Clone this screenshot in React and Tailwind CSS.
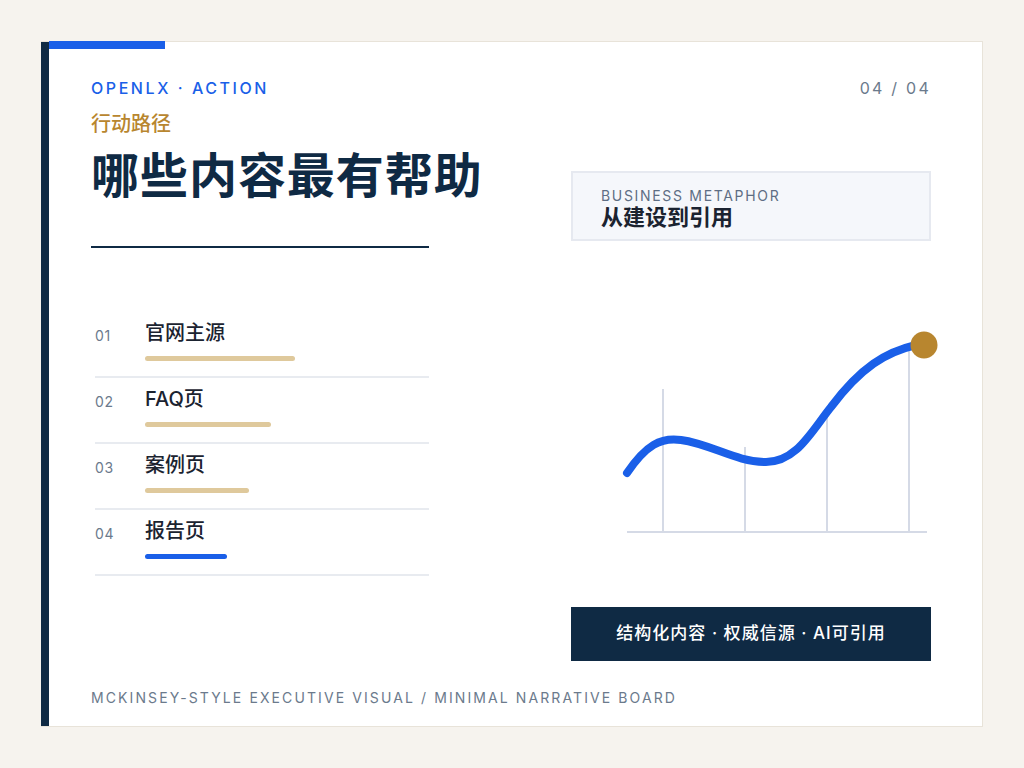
import React from 'react';

const items = [
  { no: '01', title: '官网主源', w: 'w-[150px]', color: 'bg-[#dfc99c]' },
  { no: '02', title: 'FAQ页', w: 'w-[126px]', color: 'bg-[#dfc99c]' },
  { no: '03', title: '案例页', w: 'w-[104px]', color: 'bg-[#dfc99c]' },
  { no: '04', title: '报告页', w: 'w-[82px]', color: 'bg-[#1a5fe8]' }
];

const font = { fontFamily: 'Inter, "Noto Sans CJK SC", sans-serif' };

const App = () => {
  return (
    <div className="w-[1024px] h-[768px] bg-[#f6f3ee] pt-[41px] pl-[41px]" style={font}>
      <div className="relative w-[942px] h-[686px] bg-white border border-[#e8e3d9] border-l-0">
        <div className="flex h-full border-l-[8px] border-[#0f2a44] flex-col pl-[42px] pr-[51px] pt-[34px]">
          <div className="absolute left-[8px] -top-px w-[116px] h-[8px] bg-[#1a5fe8]" />
          <div className="flex justify-between items-center">
            <div className="text-[16px] tracking-[0.16em] text-[#1a5fe8] font-medium">OPENLX · ACTION</div>
            <div className="text-[16px] tracking-[0.14em] text-[#6b7a8c]">04 / 04</div>
          </div>
          <div className="mt-[10px] text-[20px] text-[#b8862f] font-medium leading-[28px]">行动路径</div>
          <div className="flex justify-between mt-[12px]">
            <div className="w-[338px]">
              <h1 className="text-[48px] leading-[52px] font-bold text-[#0f2a44] whitespace-nowrap tracking-[0.02em]">哪些内容最有帮助</h1>
              <div className="mt-[44px] h-[2px] bg-[#0f2a44]" />
              <div className="mt-[64px] ml-1">
                {items.map(it => (
                  <div key={it.no} className="flex h-[66px] border-b-2 border-[#e8ebf0] pt-[9px]">
                    <div className="w-[50px] text-[14px] text-[#6b7a8c] tracking-wider pt-[4px]">{it.no}</div>
                    <div>
                      <div className="text-[20px] leading-[24px] font-medium text-[#1b2330]">{it.title}</div>
                      <div className={`mt-[11px] h-[5px] rounded-full ${it.w} ${it.color}`} />
                    </div>
                  </div>
                ))}
              </div>
            </div>
            <div className="w-[360px] mt-[21px]">
              <div className="h-[70px] bg-[#f5f7fb] border-2 border-[#e6e9f0] px-[28px] pt-[15px]">
                <div className="text-[14px] leading-[16px] tracking-[0.12em] text-[#5e6e84]">BUSINESS METAPHOR</div>
                <div className="text-[22px] leading-[26px] font-bold text-[#1b2330]">从建设到引用</div>
              </div>
              <svg width="360" height="366" viewBox="0 0 360 366" className="block overflow-visible">
                <line x1="56" y1="291" x2="356" y2="291" stroke="#d5dae6" strokeWidth="2" />
                <line x1="92" y1="148" x2="92" y2="291" stroke="#d5dae6" strokeWidth="2" />
                <line x1="174" y1="206" x2="174" y2="291" stroke="#d5dae6" strokeWidth="2" />
                <line x1="256" y1="172" x2="256" y2="291" stroke="#d5dae6" strokeWidth="2" />
                <line x1="338" y1="104" x2="338" y2="291" stroke="#d5dae6" strokeWidth="2" />
                <path d="M56 232 C75 204 90 196 110 199 C140 203 165 221 195 221 C225 221 240 191 260 166 C290 126 315 111 345 104" fill="none" stroke="#1a5fe8" strokeWidth="8" strokeLinecap="round" />
                <circle cx="353" cy="104" r="13.5" fill="#b8862f" />
              </svg>
              <div className="h-[54px] bg-[#0f2a44] flex items-center justify-center text-white text-[17px] font-medium tracking-[0.06em] whitespace-pre">
                结构化内容 · 权威信源 · AI可引用
              </div>
            </div>
          </div>
          <div className="mt-[26px] text-[14px] tracking-[0.15em] text-[#6b7a8c]">
            MCKINSEY-STYLE EXECUTIVE VISUAL / MINIMAL NARRATIVE BOARD
          </div>
        </div>
      </div>
    </div>
  );
};

export default App;
